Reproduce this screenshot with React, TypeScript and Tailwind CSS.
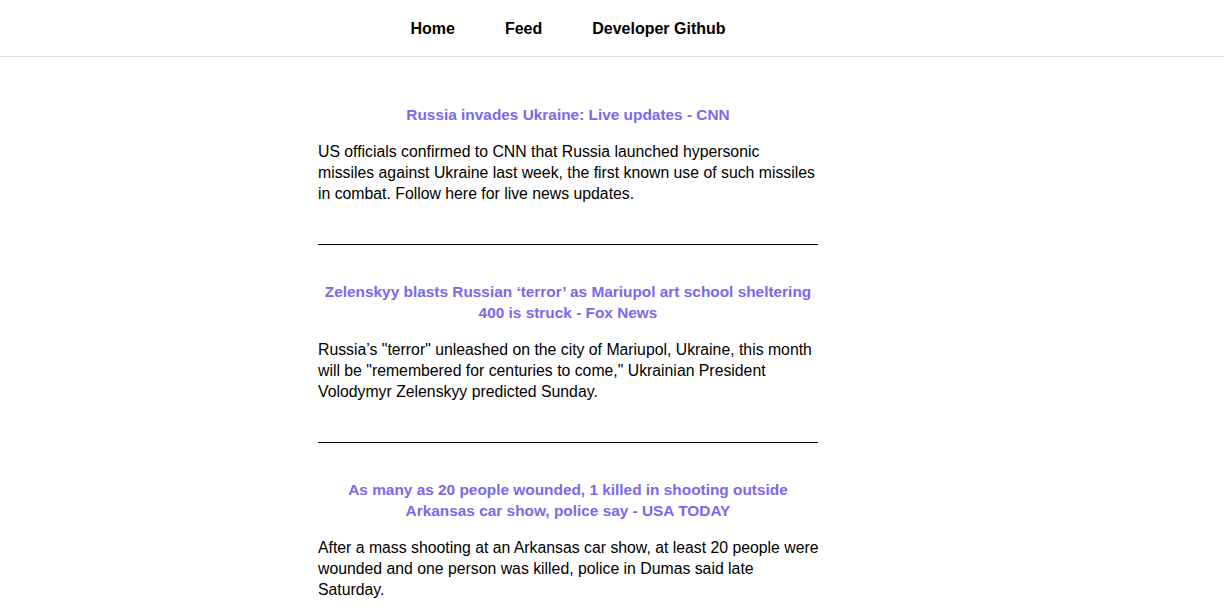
import React from "react";

const items = [
  {
    title: ["Russia invades Ukraine: Live updates - CNN"],
    body: [
      "US officials confirmed to CNN that Russia launched hypersonic",
      "missiles against Ukraine last week, the first known use of such missiles",
      "in combat. Follow here for live news updates.",
    ],
  },
  {
    title: ["Zelenskyy blasts Russian \u2018terror\u2019 as Mariupol art school sheltering", "400 is struck - Fox News"],
    body: [
      "Russia\u2019s \"terror\" unleashed on the city of Mariupol, Ukraine, this month",
      "will be \"remembered for centuries to come,\" Ukrainian President",
      "Volodymyr Zelenskyy predicted Sunday.",
    ],
  },
  {
    title: ["As many as 20 people wounded, 1 killed in shooting outside", "Arkansas car show, police say - USA TODAY"],
    body: [
      "After a mass shooting at an Arkansas car show, at least 20 people were",
      "wounded and one person was killed, police in Dumas said late",
      "Saturday.",
    ],
  },
];

export default function App() {
  return (
    <div className="min-h-screen bg-white text-black" style={{ fontFamily: '"Liberation Sans", Arial, sans-serif' }}>
      <header className="h-[57px] border-b border-[#dddddd]">
        <nav className="w-[1136px] h-full flex items-center justify-center pt-[1px]">
          <a className="px-[25px] font-bold text-[16px]">Home</a>
          <a className="px-[25px] font-bold text-[16px]">Feed</a>
          <a className="px-[25px] font-bold text-[16px]">Developer Github</a>
        </nav>
      </header>
      <main className="w-[1136px] flex justify-center pt-[47px]">
        <div className="w-[500px] flex flex-col">
          {items.map((it, i) => (
            <article key={i} className="flex flex-col">
              <h3 className="text-center font-bold text-[15.4px] leading-[21px] text-[#7b68ee]">
                {it.title.map((l, j) => (
                  <span key={j} className="block whitespace-nowrap">{l}</span>
                ))}
              </h3>
              <p className="mt-[16px] text-[15.8px] leading-[21px]">
                {it.body.map((l, j) => (
                  <span key={j} className="block whitespace-nowrap">{l}</span>
                ))}
              </p>
              <hr className="mt-[40px] mb-[36px] border-t border-black" />
            </article>
          ))}
        </div>
      </main>
    </div>
  );
}
